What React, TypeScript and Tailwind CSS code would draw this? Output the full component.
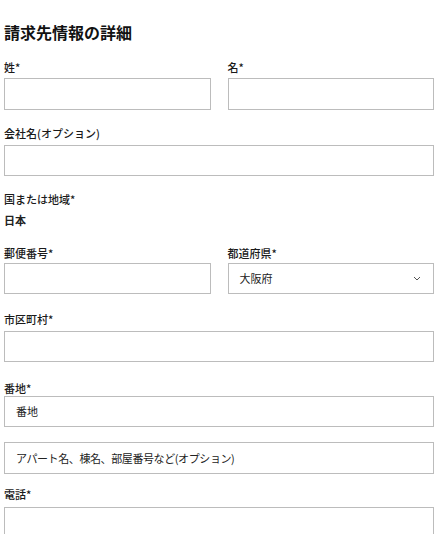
import { ReactNode } from "react";

const font = { fontFamily: '"Noto Sans CJK JP", "Noto Sans", sans-serif' };

const Label = ({ children, className = "" }: { children: ReactNode; className?: string }) => (
  <div className={`text-[11px] leading-4 font-medium text-[#1a1a1a] ${className}`}>{children}</div>
);

const Input = ({ placeholder, className = "" }: { placeholder?: string; className?: string }) => (
  <div
    className={`h-[31px] border border-[#bcbcbc] bg-white flex items-center px-[11px] text-[11px] text-[#222] ${className}`}
  >
    {placeholder}
  </div>
);

export default function App() {
  return (
    <div style={font} className="w-[440px] h-[534px] overflow-hidden bg-white pl-1 pr-1.5 pt-5">
      <h1 className="text-[16px] leading-6 font-bold text-[#111]">請求先情報の詳細</h1>

      <div className="mt-[15px] grid grid-cols-2 gap-x-[17px]">
        <div>
          <Label className="mb-[3px]">姓*</Label>
          <Input className="h-[32px]" />
        </div>
        <div>
          <Label className="mb-[3px]">名*</Label>
          <Input className="h-[32px]" />
        </div>
      </div>

      <div className="mt-[15px]">
        <Label className="mb-[4px]">会社名(オプション)</Label>
        <Input />
      </div>

      <div className="mt-[15px]">
        <Label>国または地域*</Label>
        <div className="mt-[5px] text-[11px] leading-4 font-bold text-[#222]">日本</div>
      </div>

      <div className="mt-[17px] grid grid-cols-2 gap-x-[17px]">
        <div>
          <Label className="mb-[2px]">郵便番号*</Label>
          <Input />
        </div>
        <div>
          <Label className="mb-[2px]">都道府県*</Label>
          <div className="h-[31px] border border-[#bcbcbc] bg-white flex items-center justify-between pl-[11px] pr-[12px] text-[11px] text-[#222]">
            <span>大阪府</span>
            <svg width="8" height="5" viewBox="0 0 8 5" fill="none">
              <path d="M1 1l3 3 3-3" stroke="#555" strokeWidth="1" />
            </svg>
          </div>
        </div>
      </div>

      <div className="mt-[17px]">
        <Label className="mb-[4px]">市区町村*</Label>
        <Input className="h-[30px]" />
      </div>

      <div className="mt-[18px]">
        <Label className="mb-[0px]">番地*</Label>
        <Input className="h-[30px]" placeholder="番地" />
      </div>

      <Input
        className="mt-[15px] h-[32px] tracking-[-0.4px]"
        placeholder="アパート名、棟名、部屋番号など(オプション)"
      />

      <div className="mt-[12px]">
        <Label className="mb-[5px]">電話*</Label>
        <Input />
      </div>
    </div>
  );
}
